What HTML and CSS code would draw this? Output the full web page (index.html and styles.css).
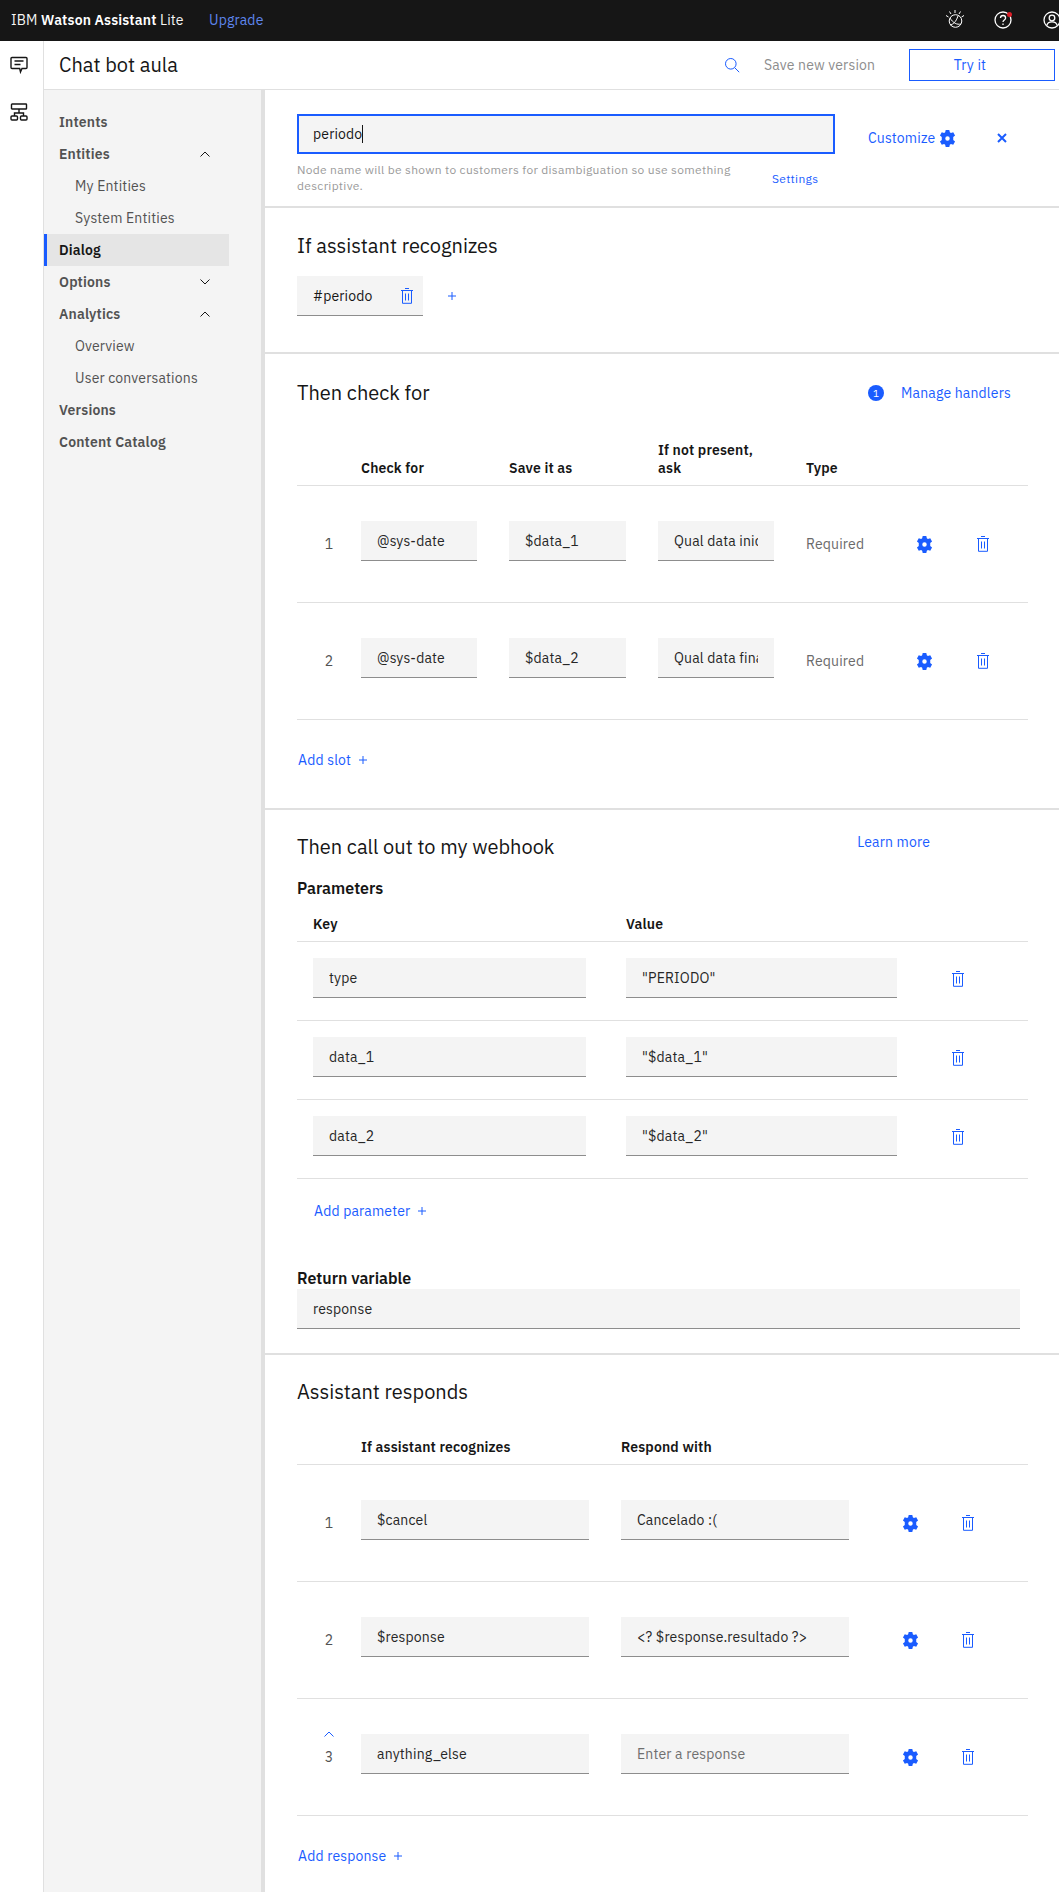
FILE: index.html
```html
<!DOCTYPE html>
<html lang="en">
<head>
<meta charset="utf-8">
<title>IBM Watson Assistant</title>
<link rel="stylesheet" href="styles.css">
</head>
<body>
<svg class="defs" width="0" height="0" aria-hidden="true">
  <symbol id="gear" viewBox="0 0 16 16">
    <path fill="#1a5cff" fill-rule="evenodd" d="M6.300 0h3.400l.5 2.200 1 .6 2.200-.7 1.700 3-1.700 1.500v2.800l1.700 1.500-1.700 3-2.200-.7-1 .6-.5 2.200H6.300l-.5-2.200-1-.6-2.200.7-1.700-3 1.700-1.500V6.600L.9 5.100l1.700-3 2.200.7 1-.6L6.300 0zM8 5.900a2.100 2.100 0 1 0 0 4.200 2.100 2.100 0 0 0 0-4.200z"/>
  </symbol>
  <symbol id="trash" viewBox="0 0 14 16">
    <path fill="none" stroke="#1a5cff" stroke-width="1" d="M5 .5h4M1 2.500h12M2.500 2.500v12.800h9V2.500M5.500 5.500v7M8.500 5.500v7"/>
  </symbol>
  <symbol id="plus" viewBox="0 0 10 10">
    <path fill="none" stroke="#1a5cff" stroke-width="1" d="M5 1v8M1 5h8"/>
  </symbol>
  <symbol id="chev-up" viewBox="0 0 12 8">
    <path fill="none" stroke="currentColor" stroke-width="1" d="M1.500 6.500 6 2l4.500 4.500"/>
  </symbol>
  <symbol id="chev-down" viewBox="0 0 12 8">
    <path fill="none" stroke="currentColor" stroke-width="1" d="M1.500 1.500 6 6l4.500-4.500"/>
  </symbol>
</svg>

<header class="topbar">
  <div class="brand">IBM <b>Watson Assistant</b> Lite</div>
  <a class="upgrade">Upgrade</a>
  <div class="top-icons">
    <svg class="top-icon bee" width="20" height="20" viewBox="0 0 20 20" fill="none" stroke="#fff" stroke-width="1">
      <circle cx="10.500" cy="12" r="6.300"/>
      <path d="M10 1v3M4.500 2.500l1.500 2.500M15.500 2.500 14 5M1 6.500l2.500 1.500M19 6.500l-2.500 1.500M5 9c3 5 7 7 11 6M5 16c3-.5 6-3 8-9"/>
    </svg>
    <span class="help-wrap">
      <svg class="top-icon" width="18" height="18" viewBox="0 0 18 18" fill="none" stroke="#fff" stroke-width="1.300">
        <circle cx="9" cy="9" r="8"/>
        <path d="M6.500 7c0-1.500 1.100-2.500 2.600-2.500S11.600 5.500 11.600 7c0 1.800-2.600 2-2.600 4"/>
        <path d="M9 12.600v1.300"/>
      </svg>
      <i class="dot"></i>
    </span>
    <svg class="top-icon" width="18" height="18" viewBox="0 0 18 18" fill="none" stroke="#fff" stroke-width="1.300">
      <circle cx="9" cy="9" r="8"/>
      <circle cx="9" cy="7" r="2.800"/>
      <path d="M3.800 14.500c.5-2.500 2.500-3.700 5.200-3.700s4.700 1.200 5.200 3.700"/>
    </svg>
  </div>
</header>

<div class="shell">
  <nav class="rail">
    <svg width="18" height="18" viewBox="0 0 18 18" fill="none" stroke="#161616" stroke-width="1.400">
      <path d="M2 1.500h14a1 1 0 0 1 1 1v9a1 1 0 0 1-1 1h-4l-1.500 3.500-.8-3.500H2a1 1 0 0 1-1-1v-9a1 1 0 0 1 1-1z"/>
      <path d="M4.500 5h9M4.500 8.500h6"/>
    </svg>
    <svg width="18" height="18" viewBox="0 0 18 18" fill="none" stroke="#161616" stroke-width="1.400">
      <rect x="1.500" y="1" width="15" height="5" rx=".6"/>
      <path d="M9 6v4M4.500 13v-3h9v3"/>
      <rect x="1" y="13" width="6.500" height="4" rx="1"/>
      <rect x="10.500" y="13" width="6.500" height="4" rx="1"/>
    </svg>
  </nav>

  <div class="workspace">
    <div class="subhead">
      <h1 class="title">Chat bot aula</h1>
      <svg class="search" width="16" height="16" viewBox="0 0 16 16" fill="none" stroke="#1a5cff" stroke-width="1">
        <circle cx="6.800" cy="6.800" r="5.300"/>
        <path d="m10.700 10.700 4.500 4.500"/>
      </svg>
      <span class="save">Save new version</span>
      <button class="try">Try it</button>
    </div>

    <div class="body">
      <aside class="sidebar">
        <div class="nav-item">Intents</div>
        <div class="nav-item">Entities<svg class="chev" width="12" height="8"><use href="#chev-up"/></svg></div>
        <div class="nav-item sub">My Entities</div>
        <div class="nav-item sub">System Entities</div>
        <div class="nav-item active">Dialog</div>
        <div class="nav-item">Options<svg class="chev" width="12" height="8"><use href="#chev-down"/></svg></div>
        <div class="nav-item">Analytics<svg class="chev" width="12" height="8"><use href="#chev-up"/></svg></div>
        <div class="nav-item sub">Overview</div>
        <div class="nav-item sub">User conversations</div>
        <div class="nav-item">Versions</div>
        <div class="nav-item">Content Catalog</div>
      </aside>

      <main class="main">
        <section class="sec sec-name">
          <div class="name-col">
            <div class="name-input">periodo<span class="caret"></span></div>
            <div class="name-help">
              <p class="help">Node name will be shown to customers for disambiguation so use something descriptive.</p>
              <a class="settings">Settings</a>
            </div>
          </div>
          <a class="customize link">Customize<svg width="17" height="17"><use href="#gear"/></svg></a>
          <svg class="close" width="12" height="12" viewBox="0 0 12 12" fill="none" stroke="#1a5cff" stroke-width="2"><path d="m2 2 8 8M10 2l-8 8"/></svg>
        </section>

        <section class="sec sec-recog">
          <h2>If assistant recognizes</h2>
          <div class="chip-row">
            <div class="chip">#periodo<svg width="14" height="16"><use href="#trash"/></svg></div>
            <svg class="chip-plus" width="10" height="10"><use href="#plus"/></svg>
          </div>
        </section>

        <section class="sec sec-slots">
          <div class="head-row">
            <h2>Then check for</h2>
            <span class="badge">1</span>
            <a class="link manage">Manage handlers</a>
          </div>
          <div class="slot-grid slot-head thead">
            <span></span><span>Check for</span><span>Save it as</span><span>If not present,<br>ask</span><span>Type</span>
          </div>
          <div class="slot-grid row">
            <span class="num mid">1</span>
            <input class="field" value="@sys-date">
            <input class="field f-save" value="$data_1">
            <input class="field f-ask" value="Qual data inicial?">
            <span class="required mid">Required</span>
            <svg class="mid-ico" width="17" height="17"><use href="#gear"/></svg>
            <svg class="mid-ico" width="14" height="16"><use href="#trash"/></svg>
          </div>
          <div class="slot-grid row">
            <span class="num mid">2</span>
            <input class="field" value="@sys-date">
            <input class="field f-save" value="$data_2">
            <input class="field f-ask" value="Qual data final?">
            <span class="required mid">Required</span>
            <svg class="mid-ico" width="17" height="17"><use href="#gear"/></svg>
            <svg class="mid-ico" width="14" height="16"><use href="#trash"/></svg>
          </div>
          <a class="link add">Add slot<svg width="10" height="10"><use href="#plus"/></svg></a>
        </section>

        <section class="sec sec-hook">
          <div class="hook-head">
            <h2>Then call out to my webhook</h2>
            <a class="link learn">Learn more</a>
          </div>
          <div class="label params">Parameters</div>
          <div class="param-grid param-head thead"><span>Key</span><span>Value</span></div>
          <div class="param-grid prow">
            <input class="field" value="type">
            <input class="field" value="&quot;PERIODO&quot;">
            <svg class="p-ico" width="14" height="16"><use href="#trash"/></svg>
          </div>
          <div class="param-grid prow">
            <input class="field" value="data_1">
            <input class="field" value="&quot;$data_1&quot;">
            <svg class="p-ico" width="14" height="16"><use href="#trash"/></svg>
          </div>
          <div class="param-grid prow">
            <input class="field" value="data_2">
            <input class="field" value="&quot;$data_2&quot;">
            <svg class="p-ico" width="14" height="16"><use href="#trash"/></svg>
          </div>
          <a class="link add add-param">Add parameter<svg width="10" height="10"><use href="#plus"/></svg></a>
          <div class="label ret">Return variable</div>
          <input class="field f-ret" value="response">
        </section>

        <section class="sec sec-resp">
          <h2>Assistant responds</h2>
          <div class="resp-grid resp-head thead">
            <span></span><span>If assistant recognizes</span><span>Respond with</span>
          </div>
          <div class="resp-grid row">
            <span class="num mid">1</span>
            <input class="field" value="$cancel">
            <input class="field" value="Cancelado :(">
            <svg class="mid-ico" width="17" height="17"><use href="#gear"/></svg>
            <svg class="mid-ico" width="14" height="16"><use href="#trash"/></svg>
          </div>
          <div class="resp-grid row">
            <span class="num mid">2</span>
            <input class="field" value="$response">
            <input class="field" value="&lt;? $response.resultado ?&gt;">
            <svg class="mid-ico" width="17" height="17"><use href="#gear"/></svg>
            <svg class="mid-ico" width="14" height="16"><use href="#trash"/></svg>
          </div>
          <div class="resp-grid row">
            <span class="num mid">3<svg class="num-chev" width="12" height="8"><use href="#chev-up"/></svg></span>
            <input class="field" value="anything_else">
            <input class="field" placeholder="Enter a response">
            <svg class="mid-ico" width="17" height="17"><use href="#gear"/></svg>
            <svg class="mid-ico" width="14" height="16"><use href="#trash"/></svg>
          </div>
          <a class="link add">Add response<svg width="10" height="10"><use href="#plus"/></svg></a>
        </section>
      </main>
    </div>
  </div>
</div>
</body>
</html>
```
FILE: styles.css
```css
* { box-sizing: border-box; }
html, body { margin: 0; padding: 0; }
body {
  width: 1059px;
  height: 1892px;
  overflow: hidden;
  background: #fff;
  color: #161616;
  font-family: "IBM Plex Sans", "Noto Sans", sans-serif;
  font-size: 14px;
  letter-spacing: .16px;
}
.defs { position: absolute; }
h1, h2, p { margin: 0; font-weight: 400; }
a { color: #1a5cff; }

.topbar {
  height: 41px;
  background: #161616;
  color: #f4f4f4;
  display: flex;
  align-items: center;
  padding-left: 11px;
  padding-bottom: 1px;
}
.brand { font-size: 14px; width: 198px; white-space: nowrap; }
.brand b { font-weight: 600; color: #fff; }
.upgrade { color: #5f87ee; font-size: 14px; }
.top-icons { margin-left: auto; display: flex; align-items: center; margin-right: -2px; }
.top-icon { display: block; }
.bee { margin-right: 29px; margin-top: -2px; }
.help-wrap { position: relative; margin-right: 31px; display: block; }
.dot { position: absolute; top: 1px; right: 0; width: 5px; height: 5px; border-radius: 50%; background: #da1e28; }

.shell { display: flex; height: 1851px; }
.rail {
  width: 44px;
  flex: none;
  border-right: 1px solid #e0e0e0;
  display: flex;
  flex-direction: column;
  align-items: center;
  gap: 29px;
  padding: 15px 5px 0 0;
}
.workspace { flex: 1; display: flex; flex-direction: column; min-width: 0; }

.subhead {
  height: 49px;
  flex: none;
  border-bottom: 1px solid #e0e0e0;
  display: flex;
  align-items: center;
  padding: 0 4px 0 15px;
}
.title { font-size: 20px; line-height: 28px; width: 665px; letter-spacing: 0; }
.search { margin-right: 24px; }
.save { color: #8d8d8d; width: 145px; white-space: nowrap; }
.try {
  width: 146px;
  height: 32px;
  background: #fff;
  border: 1px solid #1a5cff;
  color: #1a5cff;
  font: inherit;
  letter-spacing: inherit;
  padding: 0 24px 0 0;
}

.body { display: flex; flex: 1; min-height: 0; }
.sidebar {
  width: 221px;
  flex: none;
  background: #f4f4f4;
  border-right: 4px solid #e0e0e0;
  padding-top: 16px;
}
.nav-item {
  width: 185px;
  height: 32px;
  display: flex;
  align-items: center;
  justify-content: space-between;
  padding: 0 18px 0 15px;
  font-weight: 600;
  color: #525252;
  white-space: nowrap;
}
.nav-item.sub { font-weight: 400; padding-left: 31px; }
.nav-item.active { background: #e5e5e5; color: #161616; border-left: 3px solid #1a5cff; padding-left: 12px; }
.chev { color: #161616; }

.main { flex: 1; min-width: 0; }
.sec { padding: 0 31px 0 32px; border-bottom: 2px solid #e0e0e0; }
.sec:last-child { border-bottom: 0; }
h2 { font-size: 20px; line-height: 28px; color: #161616; letter-spacing: 0; }
.link { color: #1a5cff; white-space: nowrap; }
.thead { font-weight: 600; line-height: 18px; padding-bottom: 8px; border-bottom: 1px solid #e0e0e0; align-items: end; }

.sec-name { height: 118px; padding-top: 24px; display: flex; align-items: flex-start; }
.name-col { width: 538px; flex: none; }
.name-input {
  height: 40px;
  border: 2px solid #1a5cff;
  background: #f4f4f4;
  display: flex;
  align-items: center;
  padding-left: 14px;
}
.caret { width: 1px; height: 18px; background: #161616; }
.name-help { display: flex; align-items: center; margin-top: 8px; }
.help { width: 475px; font-size: 12px; line-height: 16px; letter-spacing: .3px; color: #9a9a9a; flex: none; }
.settings { font-size: 12px; letter-spacing: .3px; }
.customize { display: flex; align-items: center; gap: 4px; margin: 4px 0 0 33px; height: 40px; line-height: 40px; align-self: flex-start; }
.close { margin: 18px 0 0 40px; }

.sec-recog { height: 146px; padding-top: 24px; }
.chip-row { display: flex; align-items: center; margin-top: 16px; }
.chip {
  width: 126px;
  height: 40px;
  background: #f4f4f4;
  border-bottom: 1px solid #8d8d8d;
  display: flex;
  align-items: center;
  justify-content: space-between;
  padding: 0 9px 0 16px;
}
.chip-plus { margin-left: 24px; }

.field {
  display: block;
  height: 40px;
  width: 100%;
  background: #f4f4f4;
  border: 0;
  border-bottom: 1px solid #8d8d8d;
  padding: 0 16px;
  font: inherit;
  letter-spacing: inherit;
  color: #262626;
  outline: 0;
  border-radius: 0;
}
.field::placeholder { color: #6f6f6f; opacity: 1; }

.sec-slots { height: 456px; padding-top: 25px; }
.head-row { display: flex; align-items: center; }
.head-row h2 { width: 571px; }
.badge {
  width: 16px;
  height: 16px;
  border-radius: 50%;
  background: #1a5cff;
  color: #fff;
  font-size: 10px;
  display: flex;
  align-items: center;
  justify-content: center;
}
.manage { margin-left: 17px; }

.slot-grid { display: grid; grid-template-columns: 64px 148px 149px 148px 110px 58px 16px; }
.slot-grid .field { width: 116px; }
.slot-grid .f-save { width: 117px; }
.slot-head { margin-top: 34px; }
.row { height: 117px; padding-top: 35px; border-bottom: 1px solid #e0e0e0; align-items: start; }
.num { color: #525252; }
.required { color: #6a6a6a; }
.mid { display: flex; align-items: center; height: 40px; margin-top: 3px; }
.num { justify-content: center; position: relative; }
.num-chev { position: absolute; left: 26px; top: -7px; color: #1a5cff; }
.mid-ico { margin-top: 15px; display: block; }
.slot-grid .mid-ico + .mid-ico { margin-left: 2px; }
.add { display: flex; align-items: center; gap: 7px; margin-top: 30px; line-height: 20px; padding-left: 1px; }

.sec-hook { height: 545px; padding-top: 23px; }
.hook-head { display: flex; align-items: flex-start; }
.learn { margin: -1px 98px 0 auto; line-height: 20px; }
.label { font-weight: 600; font-size: 16px; color: #161616; letter-spacing: 0; }
.params { line-height: 20px; margin-top: 17px; }
.param-grid { display: grid; grid-template-columns: 313px 325px 32px; padding-left: 16px; }
.param-grid.param-head { margin-top: 17px; grid-template-columns: 313px 1fr; }
.prow { height: 79px; padding-top: 16px; border-bottom: 1px solid #e0e0e0; }
.prow .field { width: 273px; }
.prow .field:nth-child(2) { width: 271px; }
.p-ico { display: block; margin-top: 13px; }
.add-param { margin-top: 22px; padding-left: 17px; }
.ret { line-height: 18px; margin-top: 48px; }
.f-ret { width: 723px; margin-top: 2px; }

.sec-resp { padding-top: 23px; }
.resp-grid { display: grid; grid-template-columns: 64px 260px 281px 59px 16px; }
.resp-grid .field { width: 228px; }
.resp-head { margin-top: 32px; }
```
